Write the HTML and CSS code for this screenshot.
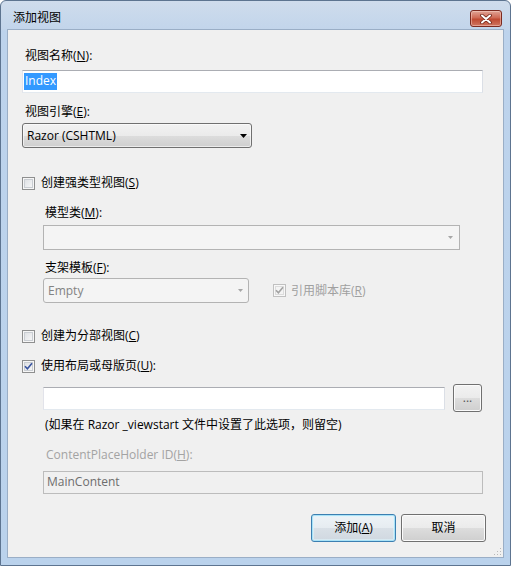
FILE: index.html
```html
<!DOCTYPE html>
<html lang="zh-CN">
<head>
<meta charset="utf-8">
<title>添加视图</title>
<link rel="stylesheet" href="styles.css">
</head>
<body>
<div class="window">
  <div class="titlebar">
    <span class="title">添加视图</span>
    <span class="close">
      <svg width="12" height="10" viewBox="0 0 12 10">
        <path d="M2 1.5 L10 8.5 M10 1.5 L2 8.5" stroke="#6e2417" stroke-width="3.6" stroke-linecap="round" fill="none"/>
        <path d="M2 1.5 L10 8.5 M10 1.5 L2 8.5" stroke="#ffffff" stroke-width="2" stroke-linecap="round" fill="none"/>
      </svg>
    </span>
  </div>
  <div class="client">
    <div class="lbl l-name">视图名称(<u>N</u>):</div>
    <div class="textbox tb-name"><span class="sel">Index</span></div>
    <div class="lbl l-engine">视图引擎(<u>E</u>):</div>
    <div class="combo combo-engine">
      <span>Razor (CSHTML)</span>
      <svg class="arrow" width="7" height="4" viewBox="0 0 7 4"><path d="M0 0 H7 L3.5 4 Z" fill="#000"/></svg>
    </div>

    <div class="chk c-strong"><span class="cb"></span><span>创建强类型视图(<u>S</u>)</span></div>

    <div class="indent">
      <div class="lbl l-model">模型类(<u>M</u>):</div>
      <div class="combo dis model">
        <svg class="arrow" width="5" height="3" viewBox="0 0 5 3"><path d="M0 0 H5 L2.5 3 Z" fill="#a6a6a6"/></svg>
      </div>
      <div class="lbl l-tpl">支架模板(<u>F</u>):</div>
      <div class="tpl-row">
        <div class="combo dis tpl">
          <span>Empty</span>
          <svg class="arrow" width="5" height="3" viewBox="0 0 5 3"><path d="M0 0 H5 L2.5 3 Z" fill="#a6a6a6"/></svg>
        </div>
        <div class="chk chk-ref dis">
          <span class="cb checked">
            <svg width="11" height="11" viewBox="0 0 11 11"><path d="M2 5.2 L4.4 7.8 L9 2.2" stroke="#a2a2a2" stroke-width="1.6" fill="none"/></svg>
          </span>
          <span>引用脚本库(<u>R</u>)</span>
        </div>
      </div>
    </div>

    <div class="chk c-partial"><span class="cb"></span><span>创建为分部视图(<u>C</u>)</span></div>
    <div class="chk c-layout">
      <span class="cb checked">
        <svg width="11" height="11" viewBox="0 0 11 11"><path d="M2 5.2 L4.4 7.8 L9 2.2" stroke="#3a55a0" stroke-width="1.6" fill="none"/></svg>
      </span>
      <span>使用布局或母版页(<u>U</u>):</span>
    </div>

    <div class="indent">
      <div class="layout-row">
        <div class="textbox tb-layout"></div>
        <div class="btn browse">...</div>
      </div>
      <div class="hint">(如果在 Razor _viewstart 文件中设置了此选项，则留空)</div>
      <div class="lbl l-cph">ContentPlaceHolder ID(<u>H</u>):</div>
      <div class="textbox tb-cph">MainContent</div>
    </div>

    <div class="buttons">
      <div class="btn default">添加(<u>A</u>)</div>
      <div class="btn">取消</div>
    </div>

    <svg class="grip" width="9" height="9" viewBox="0 0 9 9">
      <rect x="7" y="1" width="1" height="1" fill="#b9b9b9"/>
      <rect x="4" y="4" width="1" height="1" fill="#b9b9b9"/>
      <rect x="7" y="4" width="1" height="1" fill="#b9b9b9"/>
      <rect x="1" y="7" width="1" height="1" fill="#b9b9b9"/>
      <rect x="4" y="7" width="1" height="1" fill="#b9b9b9"/>
      <rect x="7" y="7" width="1" height="1" fill="#b9b9b9"/>
    </svg>
  </div>
</div>
</body>
</html>
```

FILE: styles.css
```css
* { box-sizing: border-box; }
html, body { margin: 0; padding: 0; background: #ffffff; }
body {
  font-family: "Open Sans", "Noto Sans CJK SC", sans-serif;
  font-size: 12px;
  line-height: 16px;
  color: #000;
}
u { text-decoration: underline; text-underline-offset: 1px; }

.window {
  width: 511px;
  height: 566px;
  border: 1px solid #5d7490;
  border-radius: 6px 6px 0 0;
  background: linear-gradient(#cfdcec 0, #c2d5eb 28px, #bdd3ec 30px, #bad2ec 100%);
  overflow: hidden;
}

.titlebar {
  height: 28px;
  display: flex;
  align-items: flex-start;
  padding: 0 8px 0 12px;
}
.title { margin-top: 9px; color: #000; }
.close {
  margin-left: auto;
  margin-top: 9px;
  width: 32px;
  height: 17px;
  border: 1px solid #7b2a20;
  border-radius: 3px;
  background: linear-gradient(#e0a496, #cf6a55 45%, #bf4a32 55%, #cf7560);
  box-shadow: inset 0 0 0 1px rgba(255, 220, 210, 0.45);
  display: flex;
  align-items: center;
  justify-content: center;
}

.client {
  margin: 0 6px;
  height: 529px;
  border: 1px solid #9aaec6;
  background: #f0f0f0;
  padding: 0 20px 0 14px;
  position: relative;
}

.lbl { height: 16px; padding-left: 3px; white-space: nowrap; }
.l-name { margin-top: 18px; }
.l-engine { margin-top: 11px; }

.textbox {
  height: 23px;
  border: 1px solid #abadb3;
  border-color: #abadb3 #dbdfe6 #e3e9ef #e2e3ea;
  background: #fff;
  padding: 2px 1px;
  white-space: nowrap;
}
.tb-name { margin-top: 6px; }
.sel {
  display: inline-block;
  height: 17px;
  padding: 0 1px;
  background: #3399ff;
  color: #fff;
}

.combo {
  height: 25px;
  border: 1px solid #707070;
  border-radius: 3px;
  background: linear-gradient(#f2f2f2, #ebebeb 50%, #dddddd 50%, #cfcfcf);
  box-shadow: inset 0 0 0 1px rgba(255, 255, 255, 0.6);
  display: flex;
  align-items: center;
  padding: 0 4px 0 4px;
}
.combo .arrow { margin-left: auto; }
.combo-engine { margin-top: 3px; width: 230px; }

.combo.dis {
  border-color: #b3b3b3;
  background: #f4f4f4;
  box-shadow: none;
  color: #838383;
}
.model { margin-top: 4px; width: 417px; border-radius: 0; }
.model .arrow { margin-right: 2px; }
.tpl { width: 206px; }
.tpl .arrow { margin-right: 1px; }

.chk {
  display: flex;
  align-items: center;
  gap: 6px;
  height: 16px;
  white-space: nowrap;
}
.cb {
  width: 13px;
  height: 13px;
  flex: none;
  border: 1px solid #8e8f8f;
  background: linear-gradient(135deg, #d9dce0, #fbfbfb);
  box-shadow: inset 0 0 0 1px #f6f6f6, inset 0 0 0 2px #c9cdd2;
  display: flex;
  align-items: center;
  justify-content: center;
}
.chk.dis { color: #a0a0a0; }
.chk.dis .cb {
  border-color: #c0c0c0;
  background: #f4f4f4;
  box-shadow: inset 0 0 0 1px #f8f8f8, inset 0 0 0 2px #dcdcdc;
}

.c-strong { margin-top: 27px; }
.indent { margin-left: 21px; }
.l-model { margin-top: 14px; padding-left: 2px; }
.l-tpl { margin-top: 10px; padding-left: 2px; }
.tpl-row { margin-top: 2px; display: flex; align-items: center; }
.chk-ref { margin-left: 24px; gap: 5px; }

.c-partial { margin-top: 25px; }
.c-layout { margin-top: 14px; }

.layout-row {
  margin-top: 10px;
  height: 28px;
  display: flex;
  align-items: center;
  gap: 8px;
}
.tb-layout { width: 402px; }
.hint { margin-top: 5px; padding-left: 2px; white-space: nowrap; }
.l-cph { margin-top: 14px; color: #a3a3a3; }
.tb-cph {
  margin-top: 8px;
  background: #f0f0f0;
  border-color: #bcbcbc;
  color: #6d6d6d;
  padding-left: 3px;
}

.btn {
  height: 28px;
  border: 1px solid #707070;
  border-radius: 3px;
  background: linear-gradient(#f2f2f2, #ebebeb 50%, #dddddd 50%, #cfcfcf);
  box-shadow: inset 0 0 0 1px #fbfbfb;
  display: flex;
  align-items: center;
  justify-content: center;
  white-space: nowrap;
}
.browse { width: 29px; flex: none; color: #555; line-height: 10px; }
.buttons {
  margin-top: 20px;
  margin-right: -3px;
  display: flex;
  justify-content: flex-end;
  gap: 5px;
}
.buttons .btn { width: 85px; }
.btn.default {
  border-color: #3c7fb1;
  background: linear-gradient(#eef3f7, #e6ecf1 50%, #d9e0e7 50%, #d0d8e0);
  box-shadow: inset 0 0 0 1px #a9e2f7, inset 0 0 0 2px rgba(220, 243, 252, 0.6);
}

.grip { position: absolute; right: 1px; bottom: 1px; }
```
